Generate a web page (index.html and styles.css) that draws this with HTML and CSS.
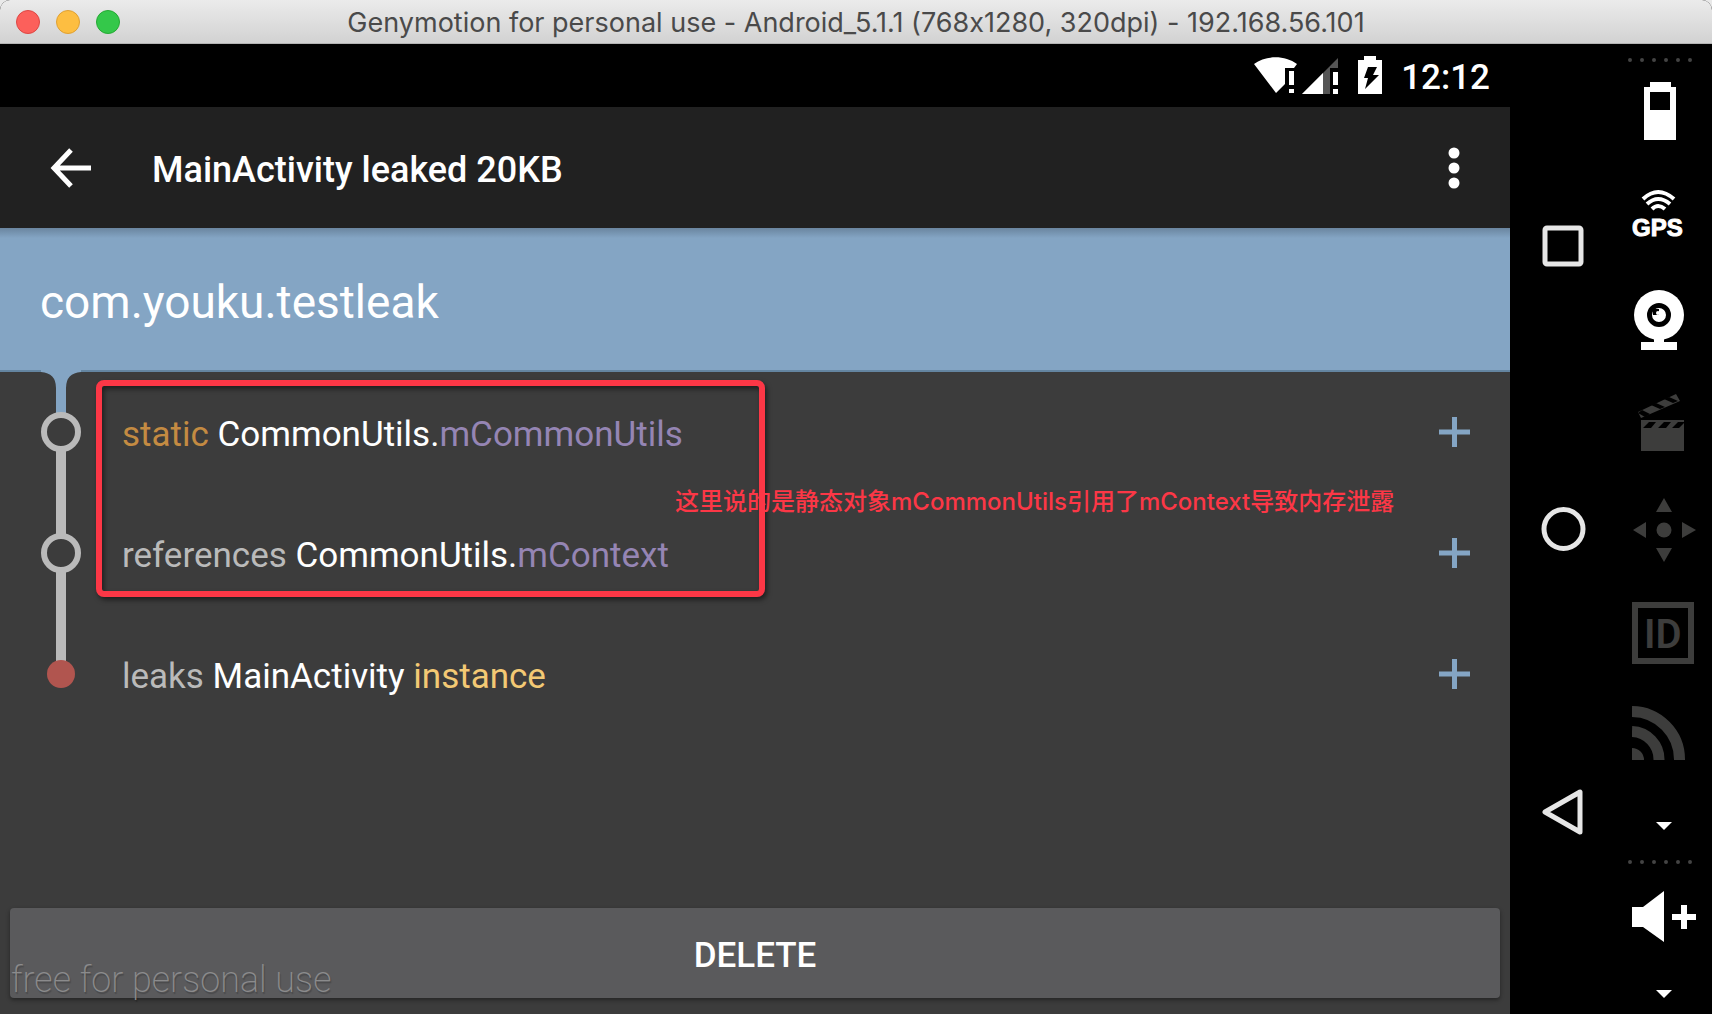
FILE: index.html
```html
<!DOCTYPE html>
<html lang="en">
<head>
<meta charset="utf-8">
<title>Genymotion for personal use</title>
<link rel="stylesheet" href="styles.css">
</head>
<body>
<div class="window">
  <header class="titlebar">
    <div class="lights">
      <button class="light light-close" aria-label="Close"></button>
      <button class="light light-min" aria-label="Minimize"></button>
      <button class="light light-max" aria-label="Zoom"></button>
    </div>
    <div class="window-title">Genymotion for personal use - Android_5.1.1 (768x1280, 320dpi) - 192.168.56.101</div>
  </header>

  <div class="device">
    <main class="screen">
      <div class="statusbar">
        <svg class="status-icons" width="132" height="40" viewBox="0 0 132 40" aria-hidden="true">
          <path d="M1 8C13-1 32-1 44 8L41 12H32V28L23 37Z" fill="#fff"/>
          <path d="M36 15h5v14h-5zM36 33h5v4h-5z" fill="#fff"/>
          <path d="M49 38L85 2v10h-8v26z" fill="#555"/>
          <path d="M49 38L70 17v21z" fill="#fff"/>
          <path d="M80 16h5v13h-5zM80 33h5v5h-5z" fill="#fff"/>
          <path d="M111 0h12v4h6v34h-24V4h6z" fill="#fff"/>
          <path d="M115 11h9l-4 8h6L112 33l3-11h-4z" fill="#000"/>
        </svg>
        <time class="clock">12:12</time>
      </div>

      <div class="appbar">
        <button class="icon-btn" aria-label="Back">
          <svg width="42" height="42" viewBox="0 0 42 42"><path d="M21 3L4 21l17 18M4 21h37" fill="none" stroke="#fff" stroke-width="5"/></svg>
        </button>
        <h1 class="appbar-title">MainActivity leaked 20KB</h1>
        <button class="icon-btn" aria-label="More options">
          <svg width="12" height="42" viewBox="0 0 12 42" fill="#fff"><circle cx="6" cy="6" r="5.500"/><circle cx="6" cy="21" r="5.500"/><circle cx="6" cy="36" r="5.500"/></svg>
        </button>
      </div>

      <h2 class="package">com.youku.testleak</h2>

      <section class="trace">
        <ul class="rows">
          <li class="row">
            <svg class="node" width="122" height="121" viewBox="0 0 122 121" aria-hidden="true">
              <path d="M41-2V0Q56 1 56 16V44h10V16Q66 1 81 0V-2Z" fill="#84a5c4"/>
              <path d="M56 76h10v45H56z" fill="#bababa"/>
              <circle cx="61" cy="60" r="17" fill="none" stroke="#bababa" stroke-width="6"/>
            </svg>
            <p class="ref"><span class="keyword">static</span> CommonUtils.<span class="field">mCommonUtils</span></p>
            <button class="expand" aria-label="Expand"><svg width="32" height="32" viewBox="0 0 32 32"><path d="M16.500 0v30M1 15h31" stroke="#84a5c4" stroke-width="5"/></svg></button>
          </li>
          <li class="row">
            <svg class="node" width="122" height="121" viewBox="0 0 122 121" aria-hidden="true">
              <path d="M56 0h10v44H56zM56 76h10v45H56z" fill="#bababa"/>
              <circle cx="61" cy="60" r="17" fill="none" stroke="#bababa" stroke-width="6"/>
            </svg>
            <p class="ref"><span class="muted">references</span> CommonUtils.<span class="field">mContext</span></p>
            <button class="expand" aria-label="Expand"><svg width="32" height="32" viewBox="0 0 32 32"><path d="M16.500 0v30M1 15h31" stroke="#84a5c4" stroke-width="5"/></svg></button>
          </li>
          <li class="row">
            <svg class="node" width="122" height="121" viewBox="0 0 122 121" aria-hidden="true">
              <path d="M56 0h10v60H56z" fill="#bababa"/>
              <circle cx="61" cy="60" r="14" fill="#b1554f"/>
            </svg>
            <p class="ref"><span class="muted">leaks</span> MainActivity <span class="instance">instance</span></p>
            <button class="expand" aria-label="Expand"><svg width="32" height="32" viewBox="0 0 32 32"><path d="M16.500 0v30M1 15h31" stroke="#84a5c4" stroke-width="5"/></svg></button>
          </li>
        </ul>
        <div class="highlight"></div>
        <p class="note" lang="zh">这里说的是静态对象mCommonUtils引用了mContext导致内存泄露</p>
      </section>

      <button class="delete">DELETE</button>
      <div class="watermark">free for personal use</div>
    </main>

    <nav class="navkeys">
      <button class="key" aria-label="Recents"><svg width="44" height="44" viewBox="0 0 44 44"><rect x="4" y="3" width="36" height="36" rx="2" fill="none" stroke="#e6e6e6" stroke-width="5"/></svg></button>
      <button class="key" aria-label="Home"><svg width="46" height="46" viewBox="0 0 46 46"><circle cx="23.500" cy="23" r="19.500" fill="none" stroke="#e6e6e6" stroke-width="5"/></svg></button>
      <button class="key" aria-label="Back"><svg width="44" height="48" viewBox="0 0 44 48"><path d="M4 23L39 3v40z" fill="none" stroke="#e6e6e6" stroke-width="5" stroke-linejoin="round"/></svg></button>
    </nav>

    <aside class="toolbar">
      <svg class="dots" width="64" height="4" viewBox="0 0 64 4" aria-hidden="true"><path d="M2 2h61" stroke="#444" stroke-width="4" stroke-linecap="round" stroke-dasharray="0 12"/></svg>
      <button class="tool" aria-label="Battery"><svg width="64" height="104" viewBox="0 0 64 104"><path d="M18 20h21v5h5v53H12V25h6zM18 30v18h20V30z" fill="#fff" fill-rule="evenodd"/></svg></button>
      <button class="tool" aria-label="GPS"><svg width="64" height="104" viewBox="0 0 64 104">
        <path d="M11 33Q26 19 42 33M15 38Q26 28 38 38M20 43Q26 37 33 43" fill="none" stroke="#fff" stroke-width="4"/>
        <text class="gps" x="0" y="70">GPS</text></svg></button>
      <button class="tool" aria-label="Camera"><svg width="64" height="104" viewBox="0 0 64 104">
        <circle cx="27" cy="45" r="25" fill="#fff"/><path d="M22 66h10v6h13v8H9v-8h13z" fill="#fff"/>
        <circle cx="27" cy="45" r="9.500" fill="#fff" stroke="#000" stroke-width="5"/><path d="M21 39h6v6h-6z" fill="#000"/><circle cx="26" cy="43" r="2" fill="#fff"/></svg></button>
      <button class="tool" aria-label="Screencast"><svg width="64" height="104" viewBox="0 0 64 104">
        <path d="M9 46h43v31H9zM6 38L44 20l4 7L9 44z" fill="#3d3d3c"/>
        <path d="M11 54l6-6h7l-5 6zM26 54l6-6h7l-5 6zM40 54l6-6h6v1l-5 5zM10 36l8 4-5 3-7-4zM19 31l9 4 5-2-9-4zM32 25l9 4 5-2-9-4z" fill="#000"/></svg></button>
      <button class="tool" aria-label="Directional pad"><svg width="64" height="104" viewBox="0 0 64 104" fill="#3d3d3c">
        <circle cx="32" cy="52" r="7.500"/><path d="M32 20l8 14H24zM32 84l8-14H24zM1 52l13-8v16zM64 52l-14-8v16z"/></svg></button>
      <button class="tool" aria-label="Identifiers"><svg width="64" height="104" viewBox="0 0 64 104">
        <rect x="3" y="23" width="56" height="56" fill="none" stroke="#3d3d3c" stroke-width="6"/>
        <text class="id" x="12" y="66">ID</text></svg></button>
      <button class="tool" aria-label="Network"><svg width="64" height="104" viewBox="0 0 64 104">
        <path d="M0 62a12 12 0 0 1 12 12H0z" fill="#3d3d3c"/><path d="M0 45.500A28 28 0 0 1 27 74M0 25.500A48 48 0 0 1 47.500 74" fill="none" stroke="#3d3d3c" stroke-width="11"/></svg></button>
      <button class="tool more" aria-label="More tools"><svg width="64" height="8" viewBox="0 0 64 8"><path d="M24 0h16l-8 8z" fill="#fff"/></svg></button>
      <svg class="dots" width="64" height="4" viewBox="0 0 64 4" aria-hidden="true"><path d="M2 2h61" stroke="#444" stroke-width="4" stroke-linecap="round" stroke-dasharray="0 12"/></svg>
      <button class="tool" aria-label="Volume up"><svg width="64" height="104" viewBox="0 0 64 104" fill="#fff">
        <path d="M0 43h11L32 27v51L11 63H0zM49 41h6v9h9v6h-9v9h-6v-9h-9v-6h9z"/></svg></button>
      <button class="tool last" aria-label="More keys"><svg width="64" height="8" viewBox="0 0 64 8"><path d="M24 0h16l-8 8z" fill="#fff"/></svg></button>
    </aside>
  </div>
</div>
</body>
</html>
```
FILE: styles.css
```css
* { box-sizing: border-box; }

body {
  margin: 0;
  background: #e9e9e9;
  font-family: Roboto, "Liberation Sans", sans-serif;
  color: #fff;
}

h1, h2, p, ul { margin: 0; padding: 0; }
ul { list-style: none; }

button {
  margin: 0;
  padding: 0;
  border: 0;
  background: none;
  color: inherit;
  font: inherit;
}

svg { display: block; }

.window {
  display: flex;
  flex-direction: column;
  min-height: 100vh;
  border-radius: 10px 10px 0 0;
  overflow: hidden;
  background: #000;
}

/* Title bar */
.titlebar {
  display: grid;
  grid-template-columns: 120px 1fr 120px;
  align-items: center;
  height: 44px;
  background: linear-gradient(#ebebeb, #d2d2d2);
  border-bottom: 1px solid #b4b4b4;
}

.lights { display: flex; gap: 16px; padding-left: 16px; }

.light { width: 24px; height: 24px; border-radius: 50%; }
.light-close { background: #fc605b; border: 1px solid #dd4744; }
.light-min { background: #fdbe41; border: 1px solid #dfa033; }
.light-max { background: #34c84a; border: 1px solid #26a934; }

.window-title {
  padding-top: 2px;
  font: 400 27px/32px Inter, "Liberation Sans", sans-serif;
  font-feature-settings: "calt" 0;
  color: #4a4a4a;
  text-align: center;
  white-space: nowrap;
}

/* Device */
.device { display: flex; flex: 1; }

.screen {
  position: relative;
  display: flex;
  flex: 1;
  flex-direction: column;
  background: #3c3c3c;
}

.statusbar {
  display: flex;
  align-items: center;
  justify-content: flex-end;
  gap: 16px;
  height: 63px;
  padding-right: 20px;
  background: #000;
}

.clock { padding-top: 4px; font-size: 35px; line-height: 40px; font-weight: 500; }

.appbar {
  display: flex;
  align-items: center;
  height: 121px;
  padding: 0 50px;
  background: #212121;
}

.appbar-title {
  flex: 1;
  padding: 4px 0 0 60px;
  font-size: 36px;
  line-height: 44px;
  font-weight: 500;
}

.package {
  height: 144px;
  padding: 0 40px;
  border-bottom: 2px solid #6485a1;
  background: linear-gradient(#6a859f, #84a5c4 10px);
  font-size: 46px;
  line-height: 148px;
  font-weight: 400;
}

.trace { position: relative; flex: 1; }

.row { display: flex; align-items: center; height: 121px; padding-right: 40px; }
.node { overflow: visible; }
.ref { flex: 1; padding-top: 4px; font-size: 35px; line-height: 44px; }
.keyword { color: #c48b42; }
.muted { color: #bababa; }
.field { color: #9585b4; }
.instance { color: #f3c974; }

/* Marks drawn over the trace */
.highlight {
  position: absolute;
  top: 8px;
  left: 96px;
  width: 669px;
  height: 217px;
  border: 6px solid #fc3746;
  border-radius: 8px;
  box-shadow: 2px 3px 5px rgba(0, 0, 0, .5), inset 2px 3px 5px rgba(0, 0, 0, .5);
}

.note {
  position: absolute;
  top: 112px;
  left: 675px;
  color: #fc3746;
  font: 500 24px/36px Inter, "Noto Sans CJK SC", sans-serif;
  white-space: nowrap;
}

.delete {
  height: 90px;
  margin: 0 10px 16px;
  padding-top: 4px;
  border-radius: 4px;
  background: #5a5a5c;
  box-shadow: 0 2px 4px rgba(0, 0, 0, .4);
  font-size: 35px;
  font-weight: 500;
}

.watermark {
  position: absolute;
  bottom: 10px;
  left: 11px;
  color: #8b8b8c;
  font-size: 36px;
  line-height: 48px;
  font-weight: 200;
  text-shadow: 1px 2px 1px rgba(0, 0, 0, .2);
}

.navkeys {
  display: flex;
  flex-direction: column;
  align-items: center;
  justify-content: center;
  gap: 237px;
  width: 106px;
  padding-top: 4px;
}

.toolbar {
  display: flex;
  flex-direction: column;
  padding: 14px 16px 0;
}

.tool { width: 64px; }
.more { padding: 32px 0 30px; }
.last { padding: 22px 0 16px; }
.dots { margin-left: -4px; }

.gps {
  fill: #fff;
  stroke: #fff;
  stroke-width: 1px;
  font: 700 24px "Liberation Sans", sans-serif;
}

.id { fill: #3d3d3c; font: 600 40px Roboto, sans-serif; }
```
